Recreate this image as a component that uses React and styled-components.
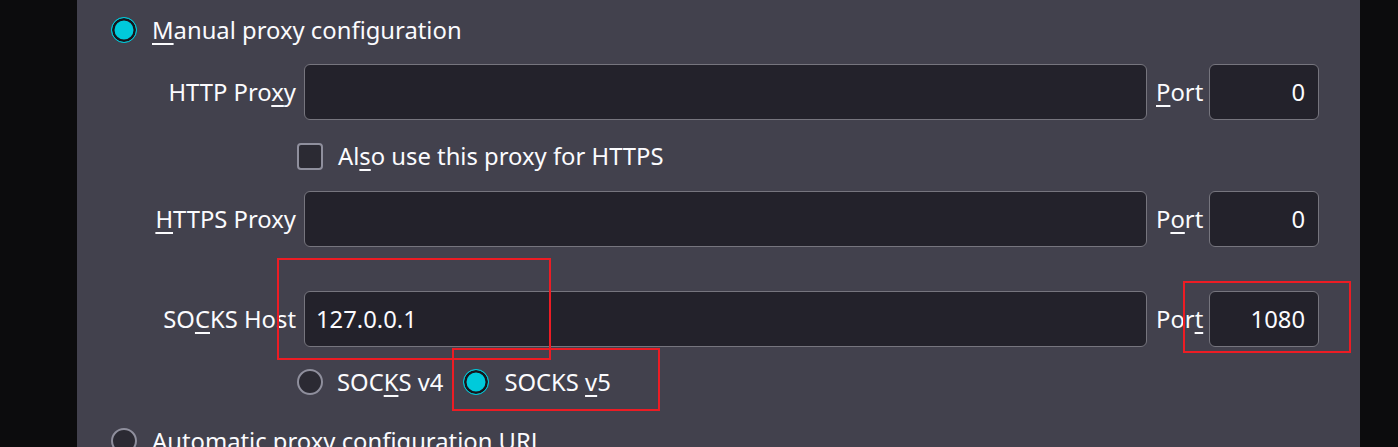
import React from "react";
import styled, { createGlobalStyle } from "styled-components";

const Global = createGlobalStyle`
  html, body {
    margin: 0;
    padding: 0;
    background: #0c0c0d;
  }
  body {
    font-family: "Noto Sans", "Open Sans", sans-serif;
    color: #fbfbfe;
  }
`;

const Page = styled.div`
  position: relative;
  width: 1398px;
  height: 447px;
  overflow: hidden;
  background: #0c0c0d;
  display: flex;
`;

const Panel = styled.div`
  margin: 0 38px 0 77px;
  flex: 1;
  background: #42414d;
  padding: 17px 41px 0 34px;
  display: flex;
  flex-direction: column;
  font-size: 23.8px;
`;

const OptionRow = styled.label`
  display: flex;
  align-items: center;
  height: 26px;
  gap: ${(p) => p.gap ?? 15}px;
  margin-top: ${(p) => p.top || 0}px;
  margin-left: ${(p) => p.indent || 0}px;
  white-space: nowrap;
`;

const Radio = styled.span`
  box-sizing: border-box;
  width: 26px;
  height: 26px;
  border-radius: 50%;
  flex: none;
  margin-right: ${(p) => p.space || 0}px;
  ${(p) =>
    p.checked
      ? `background: #00cadb; border: 1.5px solid #00cadb; box-shadow: inset 0 0 0 2.5px #17161c;`
      : `background: #2b2a33; border: 2px solid #8f8f9d;`}
`;

const Check = styled.span`
  box-sizing: border-box;
  width: 26px;
  height: 27px;
  border-radius: 4px;
  background: #2b2a33;
  border: 2px solid #8f8f9d;
  flex: none;
`;

const RadioText = styled.span`
  margin-right: ${(p) => p.space || 0}px;
`;

const Fields = styled.div`
  display: grid;
  grid-template-columns: 185px 1fr 47px 109px;
  column-gap: 8px;
  align-items: center;
  margin-top: ${(p) => p.top || 0}px;
`;

const FieldLabel = styled.span`
  text-align: right;
  white-space: nowrap;
`;

const PortLabel = styled.span`
  white-space: nowrap;
  margin-left: 1px;
`;

const Input = styled.div`
  box-sizing: border-box;
  height: 56px;
  background: #23222b;
  border: 1.5px solid #76757e;
  border-radius: 6px;
  display: flex;
  align-items: center;
  justify-content: ${(p) => (p.right ? "flex-end" : "flex-start")};
  padding: 0 13px 0 11px;
  margin-left: ${(p) => p.shift || 0}px;
`;

const Key = styled.u`
  text-decoration-thickness: 1.5px;
  text-underline-offset: 4px;
`;

const Mark = styled.div`
  position: absolute;
  box-sizing: border-box;
  border: 2px solid #ec1c24;
`;

const ProxyField = ({ label, value, port, portLabel }) => (
  <>
    <FieldLabel>{label}</FieldLabel>
    <Input>{value}</Input>
    <PortLabel>{portLabel}</PortLabel>
    <Input right shift={-1}>{port}</Input>
  </>
);

export default function App() {
  return (
    <Page>
      <Global />
      <Panel>
        <OptionRow>
          <Radio checked />
          <span>
            <Key>M</Key>anual proxy configuration
          </span>
        </OptionRow>

        <Fields top={21}>
          <ProxyField
            label={<>HTTP Pro<Key>x</Key>y</>}
            portLabel={<><Key>P</Key>ort</>}
            port="0"
          />
        </Fields>

        <OptionRow top={23} indent={186}>
          <Check />
          <span>
            Al<Key>s</Key>o use this proxy for HTTPS
          </span>
        </OptionRow>

        <Fields top={22}>
          <ProxyField
            label={<><Key>H</Key>TTPS Proxy</>}
            portLabel={<>P<Key>o</Key>rt</>}
            port="0"
          />
        </Fields>

        <Fields top={44}>
          <ProxyField
            label={<>SO<Key>C</Key>KS Host</>}
            value="127.0.0.1"
            portLabel={<>Por<Key>t</Key></>}
            port="1080"
          />
        </Fields>

        <OptionRow top={22} indent={186} gap={0}>
          <Radio space={14} />
          <RadioText space={20}>
            SOC<Key>K</Key>S v4
          </RadioText>
          <Radio checked space={15} />
          <RadioText>
            SOCKS <Key>v</Key>5
          </RadioText>
        </OptionRow>

        <OptionRow top={33}>
          <Radio />
          <span>Automatic proxy configuration URL</span>
        </OptionRow>
      </Panel>

      <Mark style={{ left: 277, top: 258, width: 274, height: 102 }} />
      <Mark style={{ left: 1183, top: 281, width: 168, height: 72 }} />
      <Mark style={{ left: 452, top: 348, width: 208, height: 63 }} />
    </Page>
  );
}
